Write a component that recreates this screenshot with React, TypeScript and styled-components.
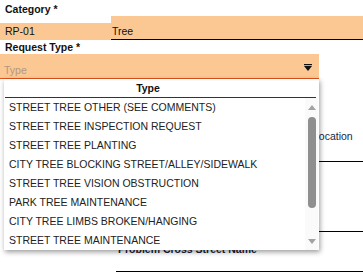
import React from "react";
import styled, { createGlobalStyle } from "styled-components";

const GlobalStyle = createGlobalStyle`
  html, body {
    margin: 0;
    padding: 0;
    background: #ffffff;
  }
  body {
    font-family: "Liberation Sans", Arial, sans-serif;
    font-size: 10.5px;
    color: #111;
  }
`;

const PEACH = "#fbc893";

const types = [
  "STREET TREE OTHER (SEE COMMENTS)",
  "STREET TREE INSPECTION REQUEST",
  "STREET TREE PLANTING",
  "CITY TREE BLOCKING STREET/ALLEY/SIDEWALK",
  "STREET TREE VISION OBSTRUCTION",
  "PARK TREE MAINTENANCE",
  "CITY TREE LIMBS BROKEN/HANGING",
  "STREET TREE MAINTENANCE",
];

const App = () => {
  return (
    <Page>
      <GlobalStyle />
      <Label $top={3}>Category *</Label>
      <CategoryRow>
        <CodeCell>RP-01</CodeCell>
        <NameCell>Tree</NameCell>
      </CategoryRow>
      <Label $lh={14}>Request Type *</Label>
      <SelectWrap>
        <SelectBox>
          <Placeholder>Type</Placeholder>
          <Caret viewBox="0 0 8 7" width="8" height="7">
            <rect x="0" y="0" width="8" height="1.2" fill="#111" />
            <polygon points="0,2 8,2 4,7" fill="#111" />
          </Caret>
        </SelectBox>
        <Dropdown>
          <DropHeader>Type</DropHeader>
          <DropBody>
            <OptionList>
              {types.map((t) => (
                <OptionItem key={t}>{t}</OptionItem>
              ))}
            </OptionList>
            <ScrollBar>
              <ArrowUp />
              <Thumb />
              <ArrowDown />
            </ScrollBar>
          </DropBody>
        </Dropdown>
      </SelectWrap>
      <LowerGrid>
        <LocationField>
          <FieldLabel>Location</FieldLabel>
          <LineInput $h={18} />
        </LocationField>
        <SpacerField>
          <LineInput $h={69} />
        </SpacerField>
        <StreetField>
          <FieldLabel $bold>Problem Cross Street Name</FieldLabel>
          <LineInput $h={15} $shift={-2} />
        </StreetField>
      </LowerGrid>
    </Page>
  );
};

export default App;

const Page = styled.div`
  width: 363px;
  height: 280px;
  overflow: hidden;
  position: relative;
`;

const Label = styled.div<{ $top?: number; $lh?: number }>`
  font-weight: bold;
  line-height: ${(p) => p.$lh ?? 13}px;
  padding: ${(p) => p.$top ?? 0}px 0 0 5px;
  color: #111;
`;

const CategoryRow = styled.div`
  display: flex;
  align-items: flex-end;
  height: 24px;
`;

const CodeCell = styled.div`
  width: 106px;
  padding-left: 5px;
  height: 17px;
  line-height: 17px;
  background: ${PEACH};
`;

const NameCell = styled.div`
  flex: 1;
  height: 23px;
  display: flex;
  align-items: flex-end;
  line-height: 15px;
  padding-left: 1px;
  background: ${PEACH};
  border-bottom: 1px solid #000;
`;

const SelectWrap = styled.div`
  position: relative;
  width: 319px;
  z-index: 5;
`;

const SelectBox = styled.div`
  height: 24px;
  background: ${PEACH};
  border-bottom: 1px solid #e2531c;
  display: flex;
  align-items: flex-end;
  justify-content: space-between;
  padding: 0 7px 0 4px;
`;

const Placeholder = styled.span`
  line-height: 15px;
  color: #b3977f;
`;

const Caret = styled.svg`
  align-self: center;
  margin-top: 2px;
`;

const Dropdown = styled.div`
  position: absolute;
  top: 100%;
  left: 4px;
  width: 315px;
  height: 171px;
  background: #fff;
  box-shadow: 1px 2px 5px rgba(0, 0, 0, 0.4);
  display: flex;
  flex-direction: column;
`;

const DropHeader = styled.div`
  margin: 0 3px 0 1px;
  padding: 1px 25px 0 0;
  height: 17px;
  line-height: 17px;
  font-weight: bold;
  text-align: center;
  border-bottom: 1px solid #333;
`;

const DropBody = styled.div`
  flex: 1;
  display: flex;
  min-height: 0;
`;

const OptionList = styled.ul`
  list-style: none;
  margin: 0;
  padding: 0;
  flex: 1;
`;

const OptionItem = styled.li`
  height: 19px;
  line-height: 19px;
  padding-left: 5px;
  color: #222;
  white-space: nowrap;
  overflow: hidden;
`;

const ScrollBar = styled.div`
  width: 13px;
  margin-right: 1px;
  background: #fafafa;
  display: flex;
  flex-direction: column;
  align-items: center;
  padding-top: 7px;
`;

const ArrowUp = styled.div`
  width: 0;
  height: 0;
  border-left: 4px solid transparent;
  border-right: 4px solid transparent;
  border-bottom: 5px solid #a3a3a3;
`;

const Thumb = styled.div`
  width: 8px;
  height: 91px;
  margin-top: 7px;
  border-radius: 4px;
  background: #8f8f8f;
`;

const ArrowDown = styled.div`
  width: 0;
  height: 0;
  margin-top: 31px;
  border-left: 4px solid transparent;
  border-right: 4px solid transparent;
  border-top: 5px solid #a3a3a3;
`;

const LowerGrid = styled.div`
  display: grid;
  grid-template-columns: 116px 197px 1fr;
`;

const LocationField = styled.div`
  grid-column: 3;
  padding-top: 50px;
`;

const SpacerField = styled.div`
  grid-column: 3;
`;

const StreetField = styled.div`
  grid-column: 2 / 4;
  padding-top: 10px;
  padding-left: 2px;
`;

const FieldLabel = styled.div<{ $bold?: boolean }>`
  line-height: 14px;
  font-weight: ${(p) => (p.$bold ? "bold" : "normal")};
  color: #1a1f3a;
  white-space: nowrap;
`;

const LineInput = styled.div<{ $h: number; $shift?: number }>`
  height: ${(p) => p.$h}px;
  border-bottom: 1px solid #000;
  margin-left: ${(p) => p.$shift ?? 0}px;
`;
